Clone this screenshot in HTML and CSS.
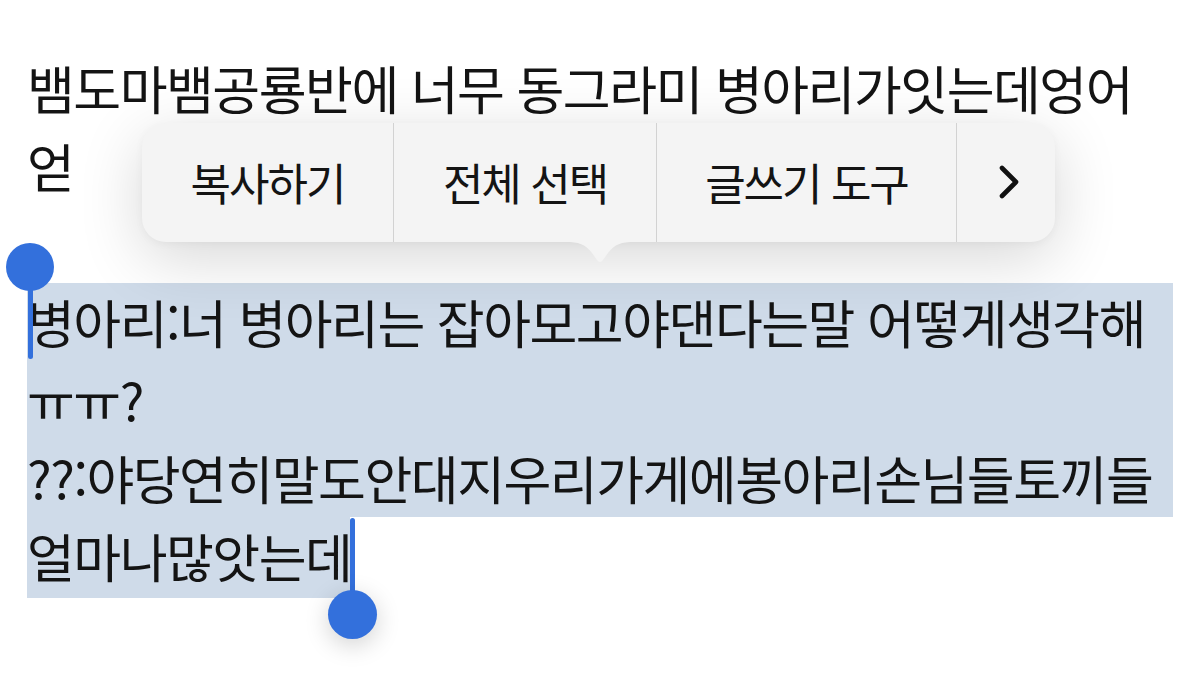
FILE: index.html
```html
<!DOCTYPE html>
<html lang="ko">
<head>
<meta charset="utf-8">
<link rel="stylesheet" href="styles.css">
</head>
<body>
<div class="page">
  <div class="doc">
    <p class="line">뱀도마뱀공룡반에 너무 동그라미 병아리가잇는데엉어</p>
    <p class="line">얻</p>
    <p class="line"></p>
    <div class="sel">
      <p class="line">병아리:너 병아리는 잡아모고야댄다는말 어떻게생각해</p>
      <p class="line">ㅠㅠ?</p>
      <p class="line">??:야당연히말도안대지우리가게에봉아리손님들토끼들</p>
    </div>
    <p class="line sel-last">얼마나많앗는데</p>
  </div>

  <div class="menu">
    <div class="item item-copy">복사하기</div>
    <div class="item item-all">전체 선택</div>
    <div class="item item-tools">글쓰기 도구</div>
    <div class="item item-more">
      <svg width="22" height="34" viewBox="0 0 22 34"><polyline points="4,3 18,17 4,31" fill="none" stroke="#111" stroke-width="4.6" stroke-linecap="round" stroke-linejoin="round"/></svg>
    </div>
    <svg class="menu-tail" width="70" height="24" viewBox="0 0 70 24"><path d="M0,0 C14,0 20,2 27,11 L32,18 Q35,22 38,18 L43,11 C50,2 56,0 70,0 Z" fill="#f4f4f4"/></svg>
  </div>

  <div class="handle handle-start">
    <span class="knob"></span>
    <span class="stem"></span>
  </div>
  <div class="handle handle-end">
    <span class="stem"></span>
    <span class="knob"></span>
  </div>
</div>
</body>
</html>
```

FILE: styles.css
```css
* { box-sizing: border-box; }
html, body {
  margin: 0;
  padding: 0;
  background: #ffffff;
}
.page {
  position: relative;
  width: 1200px;
  height: 680px;
  overflow: hidden;
  font-family: "Noto Sans CJK KR", "Noto Sans", sans-serif;
  color: #141414;
}
.doc {
  padding-top: 49px;
  margin-left: 27px;
  width: 1146px;
}
.line {
  margin: 0;
  height: 78px;
  line-height: 78px;
  font-size: 52px;
  letter-spacing: -1.5px;
  white-space: nowrap;
  padding-left: 0;
}
.sel {
  background: #cfdbe9;
}
.sel-last {
  background: #cfdbe9;
  width: 323px;
  height: 81px;
}

.menu {
  position: absolute;
  left: 142px;
  top: 123px;
  width: 913px;
  height: 119px;
  background: #f4f4f4;
  border-radius: 24px;
  box-shadow: 0 16px 64px rgba(0, 0, 0, 0.16), 0 2px 8px rgba(0, 0, 0, 0.04);
  display: flex;
  align-items: stretch;
}
.item {
  display: flex;
  align-items: center;
  justify-content: center;
  font-size: 44px;
  letter-spacing: -2px;
  color: #141414;
  border-right: 1px solid #d2d2d2;
  padding-bottom: 2px;
}
.item-copy { width: 252px; }
.item-all { width: 263px; }
.item-tools { width: 300px; }
.item-more { flex: 1; border-right: none; padding-left: 6px; }
.menu-tail {
  position: absolute;
  left: 423px;
  top: 119px;
}

.handle {
  position: absolute;
  display: flex;
  flex-direction: column;
  align-items: center;
  width: 48px;
}
.knob {
  width: 48px;
  height: 48px;
  border-radius: 50%;
  background: #3370dc;
  flex: none;
}
.stem {
  width: 5px;
  background: #3370dc;
  flex: none;
}
.handle-start {
  left: 6px;
  top: 243px;
}
.handle-start .stem {
  height: 76px;
  margin-top: -8px;
  border-radius: 0 0 3px 3px;
}
.handle-end {
  left: 328px;
  top: 518px;
}
.handle-end .stem {
  height: 82px;
  margin-bottom: -10px;
  border-radius: 3px 3px 0 0;
}
.handle-end .knob {
  width: 49px;
  height: 49px;
  box-shadow: 0 6px 24px rgba(0, 0, 0, 0.18);
}
```
